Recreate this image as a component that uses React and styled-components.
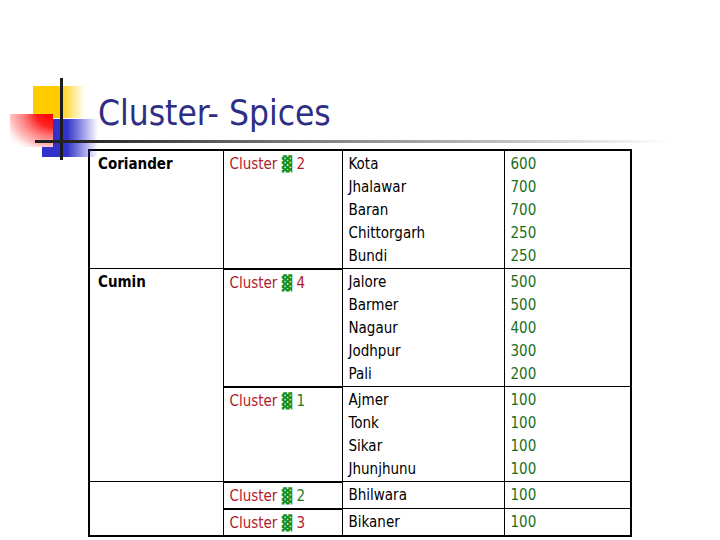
import React from "react"
import styled, { createGlobalStyle } from "styled-components"

const GlobalStyle = createGlobalStyle`
    html, body {
        margin: 0;
        background: #ffffff;
    }
    body {
        font-family: "DejaVu Sans Condensed", "DejaVu Sans", sans-serif;
    }
`

// Page frame
const Page = styled.div`
    width: 720px;
    height: 540px;
    padding-top: 78px;
    box-sizing: border-box;
    overflow: hidden;
`

// Heading with the logo and the title
const Header = styled.div`
    display: flex;
    align-items: flex-start;
    height: 71px;
    padding-left: 10px;
`

const Logo = styled.svg`
    flex: none;
    overflow: visible;
`

const TitleBlock = styled.div`
    display: flex;
    flex-direction: column;
`

const Title = styled.h1`
    margin: 15px 0 0;
    font-size: 35px;
    line-height: 40px;
    font-weight: normal;
    color: #2e2e84;
`

const Rule = styled.div`
    width: 572px;
    height: 3px;
    margin-top: 7px;
    background: linear-gradient(to right, #2a2a2a 0%, #7c7c7c 35%, #bdbdbd 70%, rgba(255,255,255,0) 100%);
`

// The table
const Table = styled.table`
    margin-left: 88px;
    width: 543px;
    table-layout: fixed;
    border-collapse: collapse;
    border: 2px solid #000;
    font-size: 15px;
    line-height: 23px;
    color: #000;
`

const Col = styled.col`
    width: ${p => p.$w}px;
`

const Cell = styled.td`
    border: 1px solid #000;
    border-top-width: ${p => (p.$thick ? 2 : 1)}px;
    padding: 2px 6px 0 ${p => (p.$first ? 8 : 6)}px;
    vertical-align: top;
    white-space: nowrap;
    font-weight: ${p => (p.$bold ? "bold" : "normal")};
`

const Red = styled.span`
    color: #b01c2c;
`

const Shade = styled.span`
    color: #14901a;
    line-height: 0;
`

const Digit = styled.span`
    color: ${p => (p.$green ? "#1c7a1c" : "#b01c2c")};
`

const Line = styled.div`
    color: ${p => (p.$num ? "#1c6e1c" : "#000")};
`

const ClusterLabel = ({ n, green }) => (
    <>
        <Red>Cluster </Red>
        <Shade>▓</Shade> <Digit $green={green}>{n}</Digit>
    </>
)

const Lines = ({ items, num }) =>
    items.map((t, i) => <Line key={i} $num={num}>{t}</Line>)

const rows = [
    { spice: "Coriander", span: 1, n: 2, places: ["Kota", "Jhalawar", "Baran", "Chittorgarh", "Bundi"], qty: ["600", "700", "700", "250", "250"] },
    { spice: "Cumin", span: 2, n: 4, places: ["Jalore", "Barmer", "Nagaur", "Jodhpur", "Pali"], qty: ["500", "500", "400", "300", "200"] },
    { n: 1, green: true, places: ["Ajmer", "Tonk", "Sikar", "Jhunjhunu"], qty: ["100", "100", "100", "100"] },
    { spice: "", span: 2, n: 2, green: true, places: ["Bhilwara"], qty: ["100"] },
    { n: 3, places: ["Bikaner"], qty: ["100"] },
]

const App = () => {
    return (
        <Page>
            <GlobalStyle />
            <Header>
                <Logo width="88" height="82" viewBox="0 0 88 82">
                    <defs>
                        <linearGradient id="yel" x1="0" y1="0" x2="1" y2="0">
                            <stop offset="0" stopColor="#ffcc00" />
                            <stop offset="0.5" stopColor="#ffcc00" />
                            <stop offset="1" stopColor="#ffcc00" stopOpacity="0" />
                        </linearGradient>
                        <linearGradient id="blu" x1="0" y1="0" x2="1" y2="0">
                            <stop offset="0" stopColor="#3030c8" />
                            <stop offset="0.45" stopColor="#3333cc" />
                            <stop offset="1" stopColor="#3333cc" stopOpacity="0" />
                        </linearGradient>
                        <radialGradient id="red" cx="1" cy="0" r="1.3" fx="1" fy="0">
                            <stop offset="0" stopColor="#ff0000" />
                            <stop offset="0.3" stopColor="#ff2020" />
                            <stop offset="0.75" stopColor="#ff8a8a" stopOpacity="0.55" />
                            <stop offset="1" stopColor="#ffffff" stopOpacity="0.1" />
                        </radialGradient>
                        <linearGradient id="ln" x1="0" y1="0" x2="1" y2="0">
                            <stop offset="0" stopColor="#1e1e1e" />
                            <stop offset="1" stopColor="#2a2a2a" />
                        </linearGradient>
                    </defs>
                    <rect x="23" y="8" width="52" height="32" fill="url(#yel)" />
                    <rect x="32" y="41" width="56" height="38" fill="url(#blu)" />
                    <rect x="0" y="36" width="43" height="33" fill="#ffffff" />
                    <rect x="0" y="36" width="43" height="33" fill="url(#red)" />
                    <rect x="50" y="0" width="3" height="82" fill="#1c1c1c" />
                    <rect x="25" y="62" width="63" height="3" fill="url(#ln)" />
                </Logo>
                <TitleBlock>
                    <Title>Cluster- Spices</Title>
                    <Rule />
                </TitleBlock>
            </Header>
            <Table>
                <colgroup>
                    <Col $w={134} />
                    <Col $w={119} />
                    <Col $w={162} />
                    <Col $w={127} />
                </colgroup>
                <tbody>
                    {rows.map((r, i) => (
                        <tr key={i}>
                            {r.spice !== undefined && (
                                <Cell $first $bold rowSpan={r.span}>{r.spice}</Cell>
                            )}
                            <Cell $thick>
                                <ClusterLabel n={r.n} green={r.green} />
                            </Cell>
                            <Cell><Lines items={r.places} /></Cell>
                            <Cell><Lines items={r.qty} num /></Cell>
                        </tr>
                    ))}
                </tbody>
            </Table>
        </Page>
    )
}

export default App
